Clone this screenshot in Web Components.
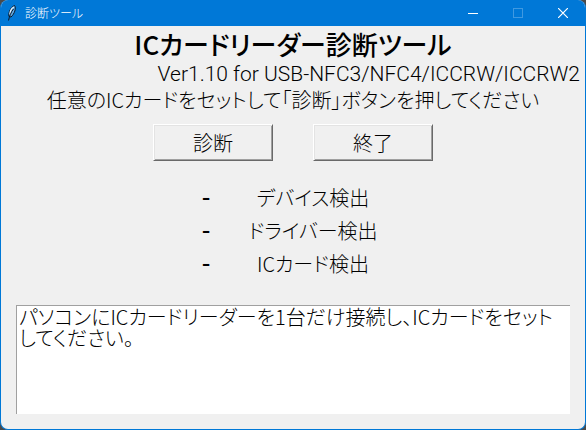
<!DOCTYPE html>
<html lang="ja">
<head>
<meta charset="utf-8">
<title>診断ツール</title>
<style>
  body {
    margin: 0;
    background: #4a4a4a;
    color: #000;
    font-family: "Noto Sans CJK JP", sans-serif;
    font-feature-settings: "palt";
  }
</style>
</head>
<body>
<tool-window caption="診断ツール">
  <tool-heading>
    ICカードリーダー診断ツール
    <span slot="version">Ver1.10 for USB-NFC3/NFC4/ICCRW/ICCRW2</span>
    <span slot="guide">任意のICカードをセットして「診断」ボタンを押してください</span>
  </tool-heading>
  <button-row>
    <push-button>診断</push-button>
    <push-button>終了</push-button>
  </button-row>
  <check-list>
    <check-item result="-">デバイス検出</check-item>
    <check-item result="-">ドライバー検出</check-item>
    <check-item result="-">ICカード検出</check-item>
  </check-list>
  <message-box label="メッセージ">パソコンにICカードリーダーを1台だけ接続し、ICカードをセットしてください。</message-box>
</tool-window>

<script>
class ToolWindow extends HTMLElement {
  constructor() {
    super();
    this.shadowDOM = this.attachShadow({ mode: "open" });
  }
  connectedCallback() {
    this.render();
  }

  render() {
    this.shadowDOM.innerHTML = `
      <style>
        * {
          box-sizing: border-box;
        }
        :host {
          display: flex;
          flex-direction: column;
          box-sizing: border-box;
          min-height: 100vh;
          border: 1px solid #0078d7;
          border-top: 0;
          border-radius: 8px;
          overflow: hidden;
          background: #f0f0f0;
        }
        header {
          display: flex;
          align-items: center;
          height: 26px;
          padding-left: 4px;
          background: #0078d7;
          color: #fff;
        }
        h1 {
          flex: 1;
          margin: 0;
          padding-left: 4px;
          font-size: 12px;
          font-weight: 300;
          line-height: 16px;
        }
        .control {
          display: grid;
          place-items: center;
          width: 45px;
          height: 26px;
          padding: 0;
          border: 0;
          background: none;
          color: #fff;
        }
        .control:disabled {
          color: #3f99e1;
        }
        svg {
          display: block;
        }
        main {
          display: flex;
          flex: 1;
          flex-direction: column;
        }
      </style>
      <header>
        <svg width="16" height="18" viewBox="0 0 16 18" aria-hidden="true">
          <path d="M4 12.500C3 8.500 6 3 9.500 1.500C11.500 4 9.500 10 6 13Z" fill="#5fa8e0" stroke="#0a1626" stroke-width="1"/>
          <path d="M5 10.500C5 7 7 4 9 3" fill="none" stroke="#e6f4ff" stroke-width="1.300"/>
          <path d="M8.500 5C6 8 4.500 12 3.500 16.500" fill="none" stroke="#0a1626" stroke-width="1"/>
        </svg>
        <h1>${this.getAttribute("caption")}</h1>
        <button class="control" aria-label="最小化">
          <svg width="10" height="10"><path d="M0 5.5H10" stroke="currentColor"/></svg>
        </button>
        <button class="control" aria-label="最大化" disabled>
          <svg width="10" height="10"><rect x=".5" y=".5" width="9" height="9" fill="none" stroke="currentColor"/></svg>
        </button>
        <button class="control" aria-label="閉じる">
          <svg width="10" height="10"><path d="M0 0L10 10M10 0L0 10" stroke="currentColor" stroke-width="1.2"/></svg>
        </button>
      </header>
      <main><slot></slot></main>
    `;
  }
}
customElements.define("tool-window", ToolWindow);

class ToolHeading extends HTMLElement {
  constructor() {
    super();
    this.shadowDOM = this.attachShadow({ mode: "open" });
  }
  connectedCallback() {
    this.render();
  }

  render() {
    this.shadowDOM.innerHTML = `
      <style>
        :host {
          display: block;
          text-align: center;
        }
        h2, p {
          margin: 0;
        }
        h2 {
          font-size: 26px;
          font-weight: 500;
          line-height: 35px;
        }
        p {
          font-size: 20px;
          font-weight: 300;
          line-height: 26px;
        }
        .version {
          padding-right: 5px;
          font-family: Roboto, "Liberation Sans", sans-serif;
          font-size: 21px;
          text-align: right;
        }
      </style>
      <h2><slot></slot></h2>
      <p class="version"><slot name="version"></slot></p>
      <p><slot name="guide"></slot></p>
    `;
  }
}
customElements.define("tool-heading", ToolHeading);

class ButtonRow extends HTMLElement {
  constructor() {
    super();
    this.shadowDOM = this.attachShadow({ mode: "open" });
  }
  connectedCallback() {
    this.render();
  }

  render() {
    this.shadowDOM.innerHTML = `
      <style>
        :host {
          display: flex;
          justify-content: center;
          gap: 40px;
          padding: 11px 0 10px;
        }
      </style>
      <slot></slot>
    `;
  }
}
customElements.define("button-row", ButtonRow);

class PushButton extends HTMLElement {
  constructor() {
    super();
    this.shadowDOM = this.attachShadow({ mode: "open" });
  }
  connectedCallback() {
    this.render();
  }

  render() {
    this.shadowDOM.innerHTML = `
      <style>
        :host {
          display: block;
        }
        button {
          display: block;
          box-sizing: border-box;
          width: 120px;
          height: 37px;
          padding: 0;
          border: 1px solid;
          border-color: #fff #696969 #696969 #fff;
          box-shadow: inset 1px 1px #e3e3e3, inset -1px -1px #a0a0a0;
          background: #f0f0f0;
          color: inherit;
          font: inherit;
          font-size: 20px;
          font-weight: 300;
          line-height: 26px;
        }
      </style>
      <button type="button"><slot></slot></button>
    `;
  }
}
customElements.define("push-button", PushButton);

class CheckList extends HTMLElement {
  constructor() {
    super();
    this.shadowDOM = this.attachShadow({ mode: "open" });
  }
  connectedCallback() {
    this.render();
  }

  render() {
    this.shadowDOM.innerHTML = `
      <style>
        :host {
          display: flex;
          flex-direction: column;
          align-items: center;
          padding: 10px 0 25px;
        }
      </style>
      <slot></slot>
    `;
  }
}
customElements.define("check-list", CheckList);

class CheckItem extends HTMLElement {
  constructor() {
    super();
    this.shadowDOM = this.attachShadow({ mode: "open" });
  }
  connectedCallback() {
    this.render();
  }

  render() {
    this.shadowDOM.innerHTML = `
      <style>
        :host {
          display: grid;
          grid-template-columns: 40px 174px;
          line-height: 33px;
          text-align: center;
        }
        .result {
          font-family: "Liberation Sans", sans-serif;
          font-size: 26px;
        }
        .name {
          font-size: 20px;
          font-weight: 300;
        }
      </style>
      <span class="result">${this.getAttribute("result")}</span>
      <span class="name"><slot></slot></span>
    `;
  }
}
customElements.define("check-item", CheckItem);

class MessageBox extends HTMLElement {
  constructor() {
    super();
    this.shadowDOM = this.attachShadow({ mode: "open" });
  }
  connectedCallback() {
    this.render();
  }

  render() {
    this.shadowDOM.innerHTML = `
      <style>
        :host {
          display: flex;
          flex: 1;
          padding: 0 15px;
          margin-bottom: 15px;
        }
        textarea {
          flex: 1;
          box-sizing: border-box;
          min-height: 108px;
          padding: 0 2px;
          border: 0 solid #a0a0a0;
          border-width: 1px 0 0 1px;
          border-radius: 0;
          outline: 0;
          resize: none;
          background: #fff;
          color: inherit;
          font: inherit;
          font-feature-settings: inherit;
          font-size: 20px;
          font-weight: 300;
          line-height: 21px;
        }
      </style>
      <textarea aria-label="${this.getAttribute("label")}" readonly>${this.textContent}</textarea>
    `;
  }
}
customElements.define("message-box", MessageBox);
</script>
</body>
</html>
